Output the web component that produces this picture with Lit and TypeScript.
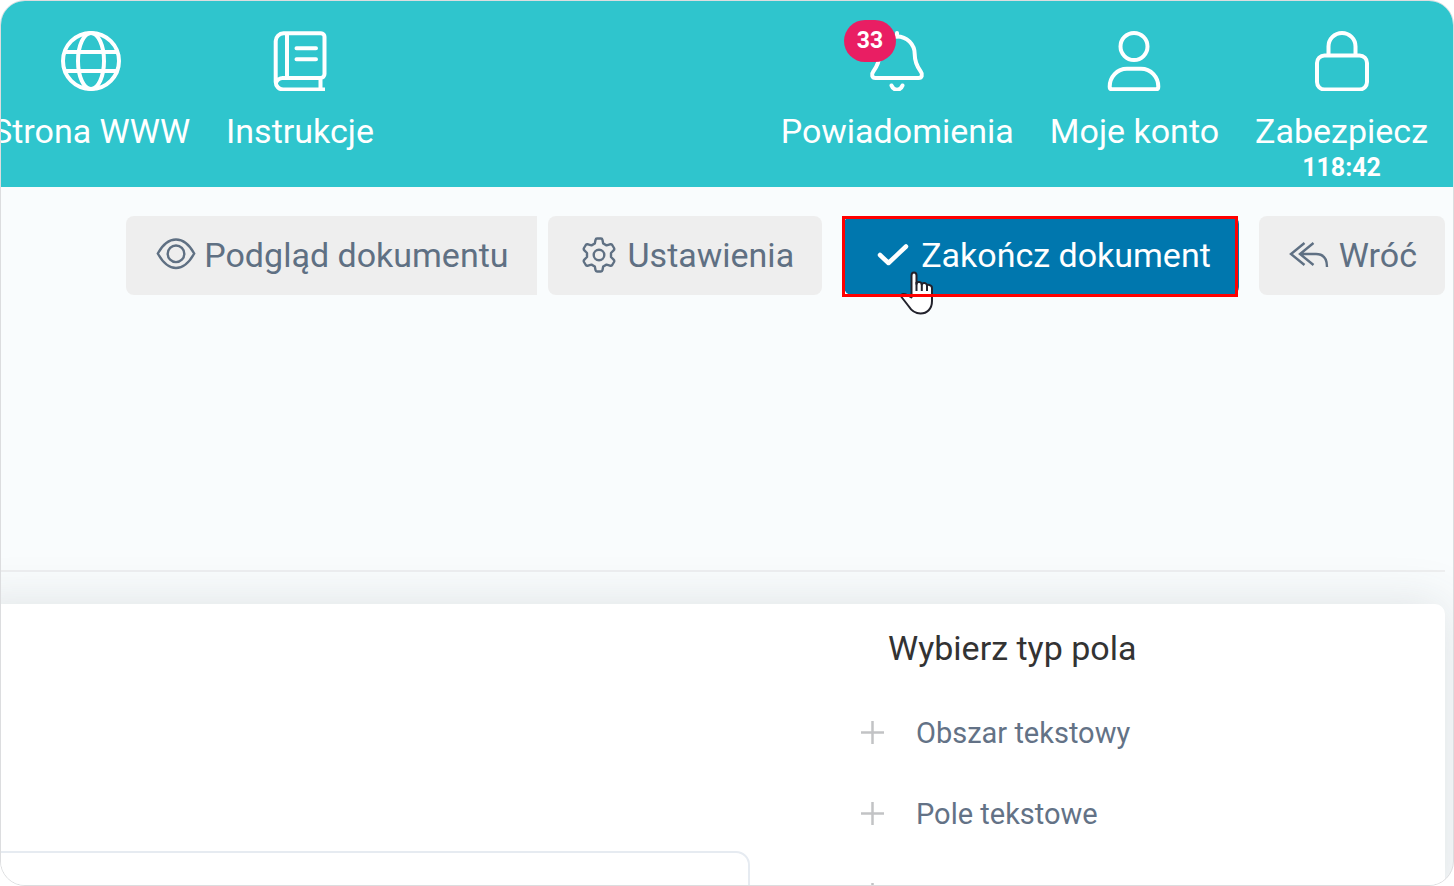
import { LitElement, html, css, svg, nothing, TemplateResult } from "lit";
import { customElement, property } from "lit/decorators.js";

const ICONS: Record<string, TemplateResult> = {
  globe: svg`<circle cx="30" cy="30" r="28"/><ellipse cx="30" cy="30" rx="13" ry="28"/><path d="M4 21H56M4 40H56"/>`,
  book: svg`<path d="M50.5 47V58M55 58.500H13A7.500 7.500 0 0 1 5.700 51V10A8 8 0 0 1 13.500 2.300H51A3.500 3.500 0 0 1 54.500 6V43A4 4 0 0 1 50.500 47H13A7 7 0 0 0 6 52M17 2.500V47"/><path stroke-linecap="round" d="M26.500 17.300H46M26.500 28.300H46"/>`,
  bell: svg`<path stroke-linecap="round" d="M30 2V5.500"/><path d="M30 5.500C20 5.500 12.500 13.500 12.500 23C12.500 31 10 35.500 6.300 40.500C4 43.500 5 47 8.500 47H51.500C55 47 56 43.500 53.700 40.500C50 35.500 47.700 31 47.700 23C47.700 13.500 40 5.500 30 5.500Z"/><path stroke-linecap="round" d="M24.500 54.500C26.500 60 33.500 60 35.500 54.500"/>`,
  user: svg`<circle cx="30" cy="15.500" r="13.500"/><path d="M23 37.700H37C47 37.700 54.300 46 54.300 55.500C54.300 57.500 53.500 58.300 52 58.300H8C6.500 58.300 5.700 57.500 5.700 55.500C5.700 46 13 37.700 23 37.700Z"/>`,
  lock: svg`<rect x="5" y="24.500" width="50" height="34" rx="7.500"/><path d="M16.500 24.500V15.500A13.500 13.500 0 0 1 43.500 15.500V24.500"/>`,
};

@customElement("nav-item")
export class NavItem extends LitElement {
  @property() icon = "";
  @property() label = "";
  @property() badge = "";
  @property() timer = "";

  static styles = css`
    :host { display: block; flex: none; }
    .link {
      display: flex;
      flex-direction: column;
      align-items: center;
      color: #fff;
      text-decoration: none;
      white-space: nowrap;
    }
    .pic { position: relative; height: 60px; }
    .icon {
      display: block;
      width: 60px;
      height: 60px;
      fill: none;
      stroke: #fff;
      stroke-width: 4;
    }
    .label { margin-top: 20px; font-size: 34px; line-height: 40px; }
    .timer { font-size: 25px; line-height: 34px; font-weight: 700; }
    .badge {
      position: absolute;
      top: -11px;
      right: 31px;
      padding: 0 13px;
      border-radius: 21px;
      background: #e91e63;
      font-size: 23px;
      line-height: 42px;
      font-weight: 700;
    }
  `;

  render() {
    return html`
      <a class="link" href="#">
        <span class="pic">
          <svg class="icon" viewBox="0 0 60 60" aria-hidden="true">${ICONS[this.icon]}</svg>
          ${this.badge ? html`<span class="badge">${this.badge}</span>` : nothing}
        </span>
        <span class="label">${this.label}</span>
        ${this.timer ? html`<span class="timer">${this.timer}</span>` : nothing}
      </a>
    `;
  }
}

@customElement("app-root")
export class AppRoot extends LitElement {
  static styles = css`
    :host {
      display: block;
      font-family: Roboto, "Liberation Sans", sans-serif;
      color: #333;
    }
    * { box-sizing: border-box; }
    .frame {
      display: flex;
      flex-direction: column;
      height: 100vh;
      overflow: hidden;
      border: 1px solid #dcdddf;
      border-radius: 25px;
      background: #f9fcfd;
    }
    .bar {
      display: flex;
      flex: none;
      justify-content: space-between;
      padding: 30px 25px 0 0;
      height: 186px;
      background: #2fc5cd;
    }
    .group { display: flex; gap: 36px; }
    .start { margin-left: -9px; }
    .actions {
      display: flex;
      flex: none;
      justify-content: flex-end;
      padding: 29px 8px 0;
    }
    .btn {
      display: flex;
      align-items: center;
      height: 79px;
      padding: 0 28px 2px 30px;
      border: 0;
      border-radius: 8px;
      background: #eee;
      color: #5f7083;
      font: 34px/40px Roboto, "Liberation Sans", sans-serif;
      white-space: nowrap;
      gap: 10px;
      cursor: pointer;
    }
    .preview { border-radius: 8px 0 0 8px; gap: 8px; margin-right: 11px; }
    .settings { gap: 11px; padding-left: 33px; margin-right: 22px; }
    .done { position: relative; margin-right: 20px; }
    .primary { background: #0077ae; color: #fff; gap: 12px; padding-left: 33px; }
    .glyph { display: block; height: 36px; fill: none; stroke: currentColor; stroke-width: 2.400; }
    .marker {
      position: absolute;
      inset: 0 1px -2px -2px;
      border: 3px solid #f00;
      pointer-events: none;
    }
    .pointer { position: absolute; left: 55px; top: 54px; width: 36px; height: 46px; }
    .rule {
      flex: none;
      height: 2px;
      margin: 275px 8px 0 0;
      border: 0;
      background: #eeeff0;
    }
    .card {
      display: grid;
      grid-template-columns: 749px 1fr;
      column-gap: 109px;
      flex: 1 0 auto;
      margin: 32px 8px 0 -40px;
      padding-left: 40px;
      border-radius: 10px;
      background: #fff;
      box-shadow: 0 0 50px rgba(65, 75, 80, 0.15);
    }
    .field {
      height: 60px;
      margin: 247px 0 0 -20px;
      border: 2px solid #e6ebf1;
      border-radius: 14px;
    }
    .side { height: 282px; }
    .title { margin: 24px 0 0 29px; font-size: 34px; line-height: 40px; font-weight: 400; }
    .types { margin: 24px 0 0; padding: 0; list-style: none; }
    .type {
      display: flex;
      align-items: center;
      gap: 31px;
      height: 81px;
      padding: 0 1px;
      border: 0;
      background: none;
      color: #637286;
      font: 29px/36px Roboto, "Liberation Sans", sans-serif;
    }
    .plus { display: block; width: 25px; height: 25px; fill: none; stroke: #c2c3c5; stroke-width: 2.500; }
  `;

  private types = ["Obszar tekstowy", "Pole tekstowe", ""];

  render() {
    return html`
      <div class="frame">
        <header class="bar">
          <nav class="group start">
            <nav-item icon="globe" label="Strona WWW"></nav-item>
            <nav-item icon="book" label="Instrukcje"></nav-item>
          </nav>
          <nav class="group">
            <nav-item icon="bell" label="Powiadomienia" badge="33"></nav-item>
            <nav-item icon="user" label="Moje konto"></nav-item>
            <nav-item icon="lock" label="Zabezpiecz" timer="118:42"></nav-item>
          </nav>
        </header>
        <div class="actions">
          <button class="btn preview">
            <svg class="glyph" width="40" viewBox="0 0 40 36" aria-hidden="true">
              <path d="M1.800 16.500C7 7 13 2.500 20 2.500S33 7 38.200 16.500C33 26 27 31 20 31S7 26 1.800 16.500Z"/>
              <circle cx="20" cy="16.800" r="8.300"/>
            </svg>
            <span>Podgląd dokumentu</span>
          </button>
          <button class="btn settings">
            <svg class="glyph" width="36" viewBox="0 0 36 36" aria-hidden="true">
              <path stroke-linejoin="round" d="M16 1.500H20Q21.200 1.500 21.500 3L22.200 6.500L25.500 8.400L29 7.300Q30.500 7 31.200 8L33 11Q33.700 12.300 32.600 13.400L30 16V20L32.600 22.600Q33.700 23.700 33 25L31.200 28Q30.500 29 29 28.700L25.500 27.600L22.200 29.500L21.500 33Q21.200 34.500 20 34.500H16Q14.800 34.500 14.500 33L13.800 29.500L10.500 27.600L7 28.700Q5.500 29 4.800 28L3 25Q2.300 23.700 3.400 22.600L6 20V16L3.400 13.400Q2.300 12.300 3 11L4.800 8Q5.500 7 7 7.300L10.500 8.400L13.800 6.500L14.500 3Q14.800 1.500 16 1.500Z"/>
              <circle cx="18" cy="18" r="5.300"/>
            </svg>
            <span>Ustawienia</span>
          </button>
          <div class="done">
            <button class="btn primary">
              <svg class="glyph" width="32" viewBox="0 0 32 36" aria-hidden="true">
                <path stroke-width="4.500" stroke-linecap="round" stroke-linejoin="round" d="M3 18L11.500 26L29 9.500"/>
              </svg>
              <span>Zakończ dokument</span>
            </button>
            <svg class="pointer" viewBox="0 0 36 46" aria-hidden="true">
              <path fill="#fff" stroke="#22222c" stroke-width="2" stroke-linejoin="round" d="M12.500 25V5.500Q12.500 2.500 15 2.500Q17.500 2.500 17.500 5.500V14Q18 11.500 20.500 12Q22.500 12.300 22.800 14.500Q23.500 12.500 25.800 13Q27.800 13.500 28 15.500Q28.500 14.300 30.500 15Q33 15.800 33 18V31C33 39 28 43.500 21.500 43.500C15 43.500 12 40 9.500 36L2.500 27Q1.500 24.500 4 24Q7 23.500 12.500 27.500Z"/>
              <path fill="none" stroke="#22222c" stroke-width="2" d="M17.500 12V21M22.800 14V21M28 15V21"/>
            </svg>
            <div class="marker"></div>
          </div>
          <button class="btn back">
            <svg class="glyph" width="40" viewBox="0 0 40 36" aria-hidden="true">
              <path d="M15.500 6L2 17L15.500 28M24.500 6L11 17L24.500 28M11 17H27C34 17 38 21 38 30"/>
            </svg>
            <span>Wróć</span>
          </button>
        </div>
        <hr class="rule" />
        <main class="card">
          <div class="field"></div>
          <section class="side">
            <h2 class="title">Wybierz typ pola</h2>
            <ul class="types">
              ${this.types.map(
                (t) => html`<li>
                  <button class="type" aria-label=${t || "Dodaj pole"}>
                    <svg class="plus" viewBox="0 0 25 25" aria-hidden="true"><path d="M12.500 1V24M1 12.500H24"/></svg>
                    ${t ? html`<span>${t}</span>` : nothing}
                  </button>
                </li>`
              )}
            </ul>
          </section>
        </main>
      </div>
    `;
  }
}
